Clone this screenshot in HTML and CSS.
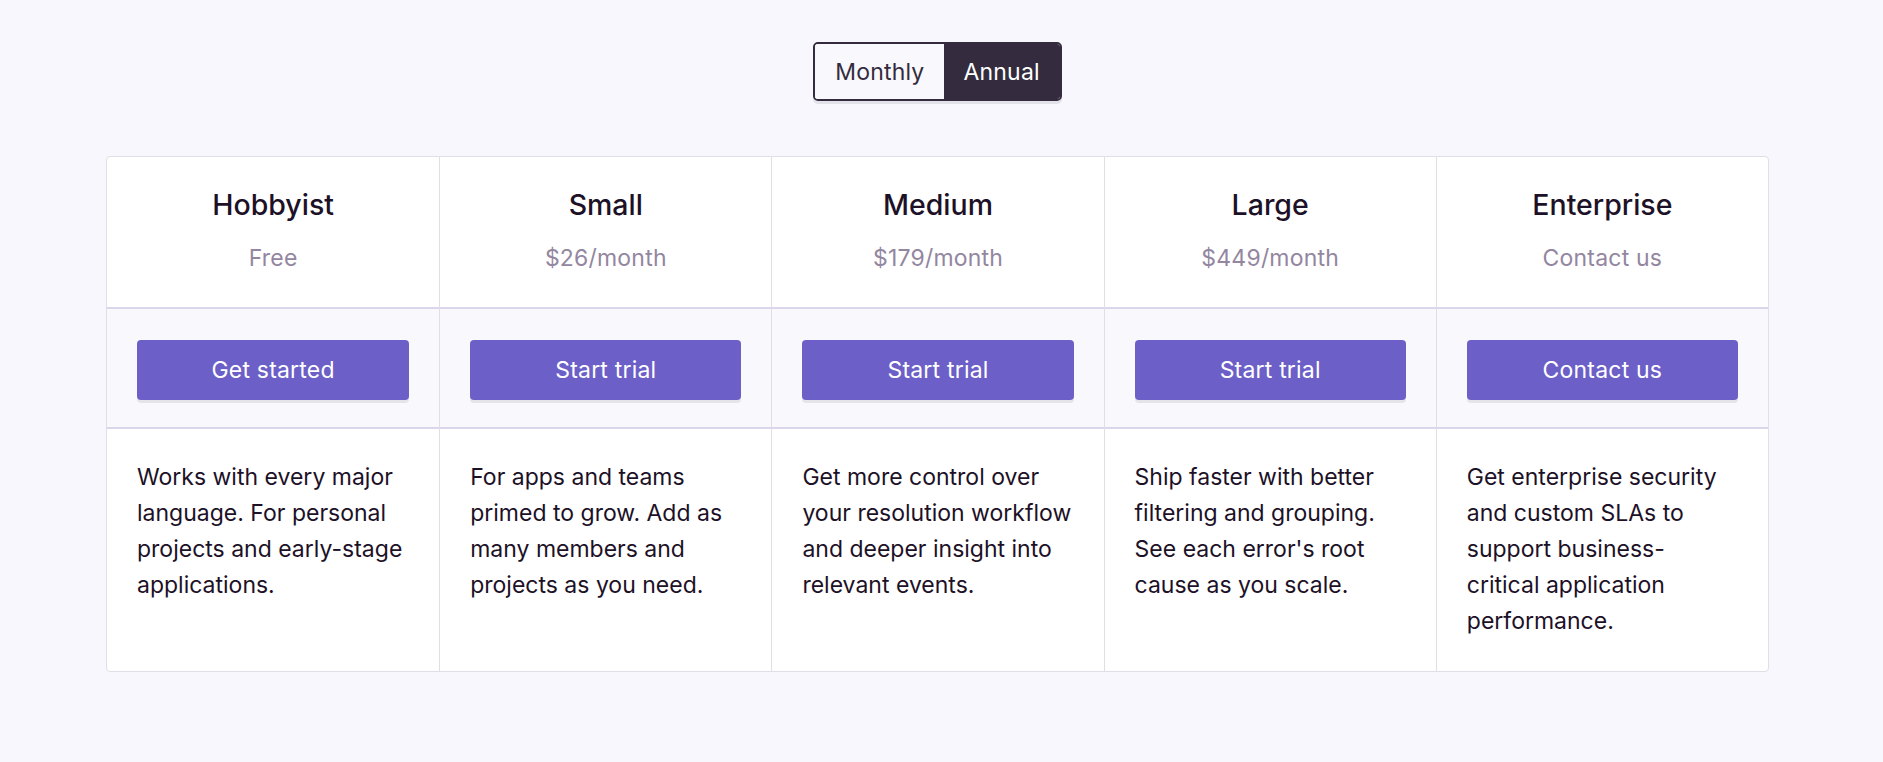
FILE: index.html
```html
<!DOCTYPE html>
<html lang="en">
<head>
<meta charset="utf-8">
<title>Pricing</title>
<link rel="stylesheet" href="styles.css">
</head>
<body>
<div class="page">
  <div class="toggle">
    <button class="toggle-opt">Monthly</button>
    <button class="toggle-opt is-active">Annual</button>
  </div>

  <div class="plans">
    <div class="cell head"><h2 class="plan-name">Hobbyist</h2><div class="plan-price">Free</div></div>
    <div class="cell head"><h2 class="plan-name">Small</h2><div class="plan-price">$26/month</div></div>
    <div class="cell head"><h2 class="plan-name">Medium</h2><div class="plan-price">$179/month</div></div>
    <div class="cell head"><h2 class="plan-name">Large</h2><div class="plan-price">$449/month</div></div>
    <div class="cell head"><h2 class="plan-name">Enterprise</h2><div class="plan-price">Contact us</div></div>

    <div class="cell action"><a class="btn">Get started</a></div>
    <div class="cell action"><a class="btn">Start trial</a></div>
    <div class="cell action"><a class="btn">Start trial</a></div>
    <div class="cell action"><a class="btn">Start trial</a></div>
    <div class="cell action"><a class="btn">Contact us</a></div>

    <div class="cell desc">Works with every major language. For personal projects and early-stage applications.</div>
    <div class="cell desc">For apps and teams primed to grow. Add as many members and projects as you need.</div>
    <div class="cell desc">Get more control over your resolution workflow and deeper insight into relevant events.</div>
    <div class="cell desc">Ship faster with better filtering and grouping. See each error's root cause as you scale.</div>
    <div class="cell desc">Get enterprise security and custom SLAs to support business-<br>critical application performance.</div>
  </div>
</div>
</body>
</html>
```

FILE: styles.css
```css
* { box-sizing: border-box; }

html, body {
  margin: 0;
  padding: 0;
  background: #f8f7fd;
}

body {
  font-family: Inter, "Noto Sans", sans-serif;
  color: #1d1127;
}

.page {
  width: 1875px;
  display: flex;
  flex-direction: column;
  align-items: center;
  padding-top: 42px;
}

.toggle {
  display: flex;
  height: 59px;
  border: 2px solid #342c3e;
  border-radius: 5px;
  overflow: hidden;
  box-shadow: 0 3px 0 rgba(52, 44, 62, 0.1);
}

.toggle-opt {
  font-family: inherit;
  font-size: 23px;
  letter-spacing: 0.2px;
  border: 0;
  margin: 0;
  padding: 0 20px;
  background: #f9f8fd;
  color: #342c3e;
}

.toggle-opt.is-active {
  background: #342c3e;
  color: #fff;
  padding: 0 20px 0 19px;
}

.plans {
  margin-top: 55px;
  width: 1663px;
  display: grid;
  grid-template-columns: repeat(5, 1fr);
  border: 1px solid #e2dee6;
  border-radius: 4px;
  overflow: hidden;
  background: #fff;
}

.cell {
  border-left: 1px solid #e2dee6;
}
.cell:nth-child(5n+1) { border-left: 0; }

.head {
  text-align: center;
  padding: 31px 20px 35px;
  border-bottom: 2px solid #dcd6ea;
}

.plan-name {
  margin: 0 0 22px;
  font-size: 28.5px;
  line-height: 34px;
  font-weight: 500;
  color: #1d1127;
}

.plan-price {
  font-size: 23px;
  line-height: 28px;
  letter-spacing: 0.2px;
  color: #9386a0;
}

.action {
  background: #f9f8fd;
  padding: 31px 30px 27px;
  border-bottom: 2px solid #dcd6ea;
}

.btn {
  display: flex;
  align-items: center;
  justify-content: center;
  height: 60px;
  background: #6c5fc7;
  color: #fff;
  font-size: 23px;
  letter-spacing: 0.2px;
  border-radius: 4px;
  box-shadow: 0 3px 0 rgba(0, 0, 0, 0.08);
}

.desc {
  padding: 30px 30px 32px;
  font-size: 23px;
  line-height: 36px;
  color: #1d1127;
}
```
